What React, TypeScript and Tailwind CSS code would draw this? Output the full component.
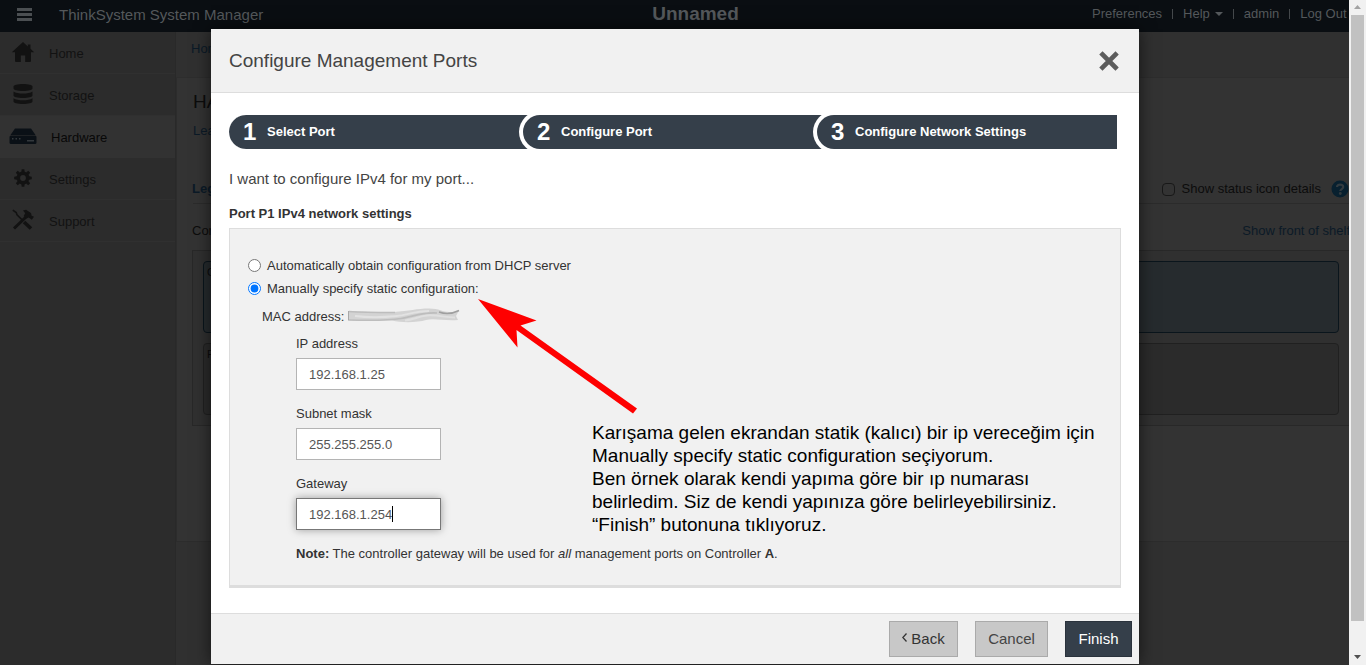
import type { ReactNode } from "react";

function HomeIcon() {
  return (
    <svg viewBox="0 0 24 22" className="h-[22px] w-6" fill="currentColor" aria-hidden="true">
      <path d="M12 1 .8 11.200H4V20a1 1 0 0 0 1 1h4.800v-6.500h4.400V21H19a1 1 0 0 0 1-1v-8.800h3.200L19.500 7.800V3.500h-2.700v1.900z" />
    </svg>
  );
}

function StorageIcon() {
  return (
    <svg viewBox="0 0 20 22" className="h-[22px] w-5" fill="currentColor" aria-hidden="true">
      <path d="M.500 3.500C.5 2 4.600 1 10 1s9.500 1 9.500 2.500v2C19.500 7 15.400 8 10 8S.5 7 .5 5.500z" />
      <path d="M.5 8.500C2.500 10 6 10.500 10 10.500s7.500-.5 9.500-2v4c0 1.500-4.100 2.500-9.500 2.500S.5 14 .5 12.500z" />
      <path d="M.5 15.300c2 1.500 5.500 2 9.500 2s7.500-.5 9.500-2v3.200c0 1.500-4.100 2.500-9.500 2.500S.5 20 .5 18.500z" />
    </svg>
  );
}

function HardwareIcon() {
  return (
    <svg viewBox="0 0 28 16" className="h-4 w-7" aria-hidden="true">
      <path d="M6 .5h16L26.500 7h-25z" fill="#0a1016" />
      <rect x=".5" y="7.500" width="27" height="8.500" rx="1.500" fill="#0a1016" />
      <path d="M3 10h1.500v1.500H3zM6.500 10H8v1.500H6.500zM10 10h1.500v1.500H10zM18 12h7v1.500h-7z" fill="#33383c" />
    </svg>
  );
}

function SettingsIcon() {
  const teeth = [0, 45, 90, 135, 180, 225, 270, 315];
  return (
    <svg viewBox="0 0 18 18" className="h-[18px] w-[18px]" aria-hidden="true">
      <circle cx="9" cy="9" r="4.700" fill="none" stroke="currentColor" strokeWidth="3.600" />
      {teeth.map((angle) => (
        <path key={angle} d="M7.300 3 7.700.2h2.600L10.700 3z" fill="currentColor" transform={`rotate(${angle} 9 9)`} />
      ))}
    </svg>
  );
}

function SupportIcon() {
  return (
    <svg viewBox="0 0 24 22" className="h-[22px] w-6" fill="none" stroke="currentColor" aria-hidden="true">
      <path d="M3 19.500 15.500 7.500" strokeWidth="3" />
      <path d="m12 1.500 3-.7 5 3.200.6 2.800 2.400 1-2.200 3-3-2.200-2.500 1-2.600-2.700 1.500-2.700z" fill="currentColor" stroke="none" />
      <path d="M1.800 1.200 5.200 3.500l.8 2.200 5 5" strokeWidth="1.600" />
      <path d="m13 13 7 6.500" strokeWidth="3.600" />
    </svg>
  );
}

const navItems: { label: string; icon: ReactNode; active?: boolean }[] = [
  { label: "Home", icon: <HomeIcon /> },
  { label: "Storage", icon: <StorageIcon /> },
  { label: "Hardware", icon: <HardwareIcon />, active: true },
  { label: "Settings", icon: <SettingsIcon /> },
  { label: "Support", icon: <SupportIcon /> },
];

function TopBar() {
  return (
    <header className="flex h-8 shrink-0 items-center bg-[#0a0e12] pb-1 text-[13px] text-[#54585b]">
      <div className="flex w-[299px] items-center">
        <button type="button" aria-label="Menu" className="ml-[17px] mr-[27px] flex w-[15px] flex-col gap-[2px] pt-[1px]">
          <span className="h-[3px] w-full bg-[#4b4f52]" />
          <span className="h-[3px] w-full bg-[#4b4f52]" />
          <span className="h-[3px] w-full bg-[#4b4f52]" />
        </button>
        <span className="pt-[2px] text-[15px]">ThinkSystem System Manager</span>
      </div>
      <div className="flex-1 text-center text-[19px] font-bold">Unnamed</div>
      <nav className="flex w-[257px] items-center whitespace-nowrap">
        <a href="#preferences">Preferences</a>
        <span className="mx-[10px] h-[10px] w-px bg-[#44484b]" />
        <a href="#help" className="flex items-center gap-[5px]">
          Help
          <svg viewBox="0 0 8 4" className="h-1 w-2" aria-hidden="true">
            <path d="M0 0h8L4 4z" fill="currentColor" />
          </svg>
        </a>
        <span className="mx-[10px] h-[10px] w-px bg-[#44484b]" />
        <a href="#admin">admin</a>
        <span className="mx-[10px] h-[10px] w-px bg-[#44484b]" />
        <a href="#logout">Log Out</a>
      </nav>
    </header>
  );
}

function SideNav() {
  return (
    <nav className="w-44 shrink-0 border-r border-[#292929] bg-[#2c2c2c] text-[13px]">
      <ul>
        {navItems.map((item) => (
          <li key={item.label} className={item.active ? "bg-[#323232]" : "border-b border-[#303030]"}>
            <a
              href={`#${item.label.toLowerCase()}`}
              className={
                item.active
                  ? "flex h-[42px] items-center pt-[2px] text-[#080808]"
                  : "flex h-[41px] items-center pt-[2px] text-[#121212]"
              }
            >
              <span className="flex w-[45px] justify-center pb-1">{item.icon}</span>
              <span className={item.active ? "pl-[6px]" : "pl-1"}>{item.label}</span>
            </a>
          </li>
        ))}
      </ul>
    </nav>
  );
}

function HardwarePage() {
  return (
    <main className="min-w-0 flex-1 overflow-hidden bg-[#303030] text-[13px] text-[#0c0c0c]">
      <div className="h-[46px] border-b border-[#2d2d2d] pl-[15px] pt-[7px] leading-5">
        <a href="#home" className="text-[#0b1a27]">Home</a>
      </div>
      <div className="h-[464px] border-b border-l border-[#2c2c2c] bg-[#333333] pl-4">
        <h1 className="pt-[12px] text-[19px] leading-6">HARDWARE</h1>
        <a href="#learn" className="mt-[7px] block leading-5 text-[#0b1a27]">Learn</a>
        <div className="mt-[34px] flex h-[29px] items-center justify-between border-b border-[#2b2b2b] leading-5">
          <a href="#legend" className="-ml-px font-bold text-[#0b1a27]">Legend</a>
          <div className="flex items-center">
            <input
              id="status-details"
              type="checkbox"
              className="mr-[7px] h-[13px] w-[13px] appearance-none rounded-sm border border-[#181818]"
            />
            <label htmlFor="status-details" className="mr-[10px]">Show status icon details</label>
            <svg viewBox="0 0 18 18" className="h-[18px] w-[18px]" aria-hidden="true">
              <circle cx="9" cy="9" r="8.500" fill="#08202f" />
              <path d="M6 7C6 3.800 12.200 3.800 12.200 7c0 2-2.900 2.100-2.900 4" fill="none" stroke="#333b40" strokeWidth="2.200" />
              <circle cx="9.300" cy="13.500" r="1.400" fill="#333b40" />
            </svg>
          </div>
        </div>
        <div className="flex h-[46px] items-center justify-between pt-2">
          <span className="-ml-px">Controller Shelf 99</span>
          <a href="#front" className="-mr-px text-[#0b1a27]">Show front of shelf</a>
        </div>
        <div className="-ml-px flex h-[176px] flex-col gap-[10px] border border-r-0 border-[#282828] bg-[#303030] py-[10px] pl-[10px] pr-[10px]">
          <div className="h-[72px] rounded-sm border border-[#0a151c] bg-[#262b2e] pl-[3px] pt-1 text-[11px] leading-3">Controller A</div>
          <div className="h-[72px] rounded-sm border border-[#202020] bg-[#2b2b2b] pl-[3px] pt-1 text-[11px] leading-3">Power</div>
        </div>
      </div>
    </main>
  );
}

function PageScrollbar() {
  return (
    <div className="flex w-[17px] shrink-0 flex-col items-center bg-[#f1f1f1]" aria-hidden="true">
      <svg viewBox="0 0 17 15" className="h-[15px] w-[17px]">
        <path d="M5 9h7L8.500 5z" fill="#a3a3a3" />
      </svg>
      <div className="w-[13px] flex-1 bg-[#c1c1c1]" />
      <div className="flex h-11 items-end">
        <svg viewBox="0 0 17 17" className="h-[17px] w-[17px]">
          <path d="M5 7h7l-3.500 4z" fill="#505050" />
        </svg>
      </div>
    </div>
  );
}

const steps = ["Select Port", "Configure Port", "Configure Network Settings"];

function Steps() {
  return (
    <ol className="mr-[4px] grid h-[34px] grid-cols-[1fr_1fr_300px] overflow-hidden rounded-l-full bg-[#353f4a]">
      {steps.map((label, index) => (
        <li
          key={label}
          className="flex items-center rounded-l-full bg-[#353f4a] pl-[14px] font-bold text-white ring-4 ring-white [clip-path:inset(0_0_0_-4px)]"
        >
          <span className="w-6 text-[24px] leading-6">{index + 1}</span>
          <span className="text-[13px]">{label}</span>
        </li>
      ))}
    </ol>
  );
}

function AddressField({ id, label, value, focused }: { id: string; label: string; value: string; focused?: boolean }) {
  return (
    <div className="mb-[14px] ml-[48px]">
      <label htmlFor={id} className="block h-6 leading-5">{label}</label>
      <div className="relative w-[145px]">
        <input
          id={id}
          type="text"
          defaultValue={value}
          className={
            focused
              ? "h-8 w-full border border-[#777777] bg-white px-3 text-[#555555] shadow-[0_0_8px_rgba(0,0,0,0.35)] outline-none"
              : "h-8 w-full border border-[#b4b4b4] bg-white px-3 text-[#555555] outline-none"
          }
        />
        {focused && <span className="absolute left-24 top-2 h-4 w-px bg-black" />}
      </div>
    </div>
  );
}

function RedactedValue() {
  return (
    <svg viewBox="0 0 114 18" className="h-[18px] w-[114px]" fill="none" aria-hidden="true">
      <path d="M1 3c16 1 30 1 46 1C62 3 70 .5 82 .5c10 0 14 3.500 20 3.500 4 0 7 0 10-1.500l-3 5.500 2 4c-14 1-24-2-32 0-8 2.500-24 3-34 .5-14 0-30 1-44-.5z" fill="#d3d3d3" />
      <path d="M1.500 3v9.500" stroke="#a8a8a8" />
      <path d="M2 3.500c14 1 30 1 46 1" stroke="#bdbdbd" strokeWidth="1.400" />
      <path d="M2 12c20 .5 40 .5 52-1.500S76 4 90 5" stroke="#bdbdbd" strokeWidth="1.600" />
      <path d="M92 4c8 3 14 1.500 20-1.500" stroke="#9f9f9f" strokeWidth="1.400" />
      <path d="M8 8c16 2 32 1 42 0s18-5 32-5" stroke="#e2e2e2" strokeWidth="2" />
      <path d="M58 12.500c10-1 12-4 22-5s18 2 28 2" stroke="#e0e0e0" strokeWidth="2" />
    </svg>
  );
}

function Annotation() {
  return (
    <>
      <svg viewBox="0 0 162 116" className="absolute left-[267px] top-[270px] h-[116px] w-[162px]" aria-hidden="true">
        <path d="M0 0 58.500 21.500 42.500 26.500 159 109.500l-4 5L38.500 31l1 17.500Z" fill="#fe0000" />
      </svg>
      <p className="absolute left-[381px] top-[392px] whitespace-nowrap text-[19px] leading-[23px] text-black">
        Karışama gelen ekrandan statik (kalıcı) bir ip vereceğim için
        <br />
        Manually specify static configuration seçiyorum.
        <br />
        Ben örnek olarak kendi yapıma göre bir ıp numarası
        <br />
        belirledim. Siz de kendi yapınıza göre belirleyebilirsiniz.
        <br />
        “Finish” butonuna tıklıyoruz.
      </p>
    </>
  );
}

function ConfigureDialog() {
  return (
    <section
      role="dialog"
      aria-labelledby="dialog-title"
      className="relative w-[928px] max-w-full bg-white text-[13px] text-[#333333] shadow-[0_0_16px_rgba(0,0,0,0.6)]"
    >
      <header className="flex h-16 items-center justify-between border-b border-[#dddddd] bg-[#f1f1f1] pl-[18px] pr-5">
        <h2 id="dialog-title" className="pt-[2px] text-[19px] text-[#444444]">Configure Management Ports</h2>
        <button type="button" aria-label="Close">
          <svg viewBox="0 0 20 20" className="h-5 w-5" aria-hidden="true">
            <path d="m3.500 3.500 13 13M16.500 3.500l-13 13" stroke="#5c5c5c" strokeWidth="4.600" strokeLinecap="square" strokeLinejoin="round" />
          </svg>
        </button>
      </header>
      <div className="px-[18px] pb-[25px] pt-[22px]">
        <Steps />
        <p className="mt-5 text-[15px] leading-5 text-[#444444]">I want to configure IPv4 for my port...</p>
        <h3 className="mt-[15px] font-bold leading-5">Port P1 IPv4 network settings</h3>
        <form className="mt-1 border border-b-[3px] border-[#dddddd] bg-[#f1f1f1] pb-[21px] pl-[18px] pt-[25px]">
          <div className="flex h-[23px] items-center">
            <input id="dhcp" type="radio" name="mode" className="mr-[6px] h-[13px] w-[13px]" />
            <label htmlFor="dhcp">Automatically obtain configuration from DHCP server</label>
          </div>
          <div className="flex h-[23px] items-center">
            <input id="static" type="radio" name="mode" defaultChecked className="mr-[6px] h-[13px] w-[13px] accent-[#0075ff]" />
            <label htmlFor="static">Manually specify static configuration:</label>
          </div>
          <div className="ml-[14px] mt-[7px] flex h-5 items-center gap-[3px]">
            MAC address:
            <RedactedValue />
          </div>
          <div className="mt-[7px]">
            <AddressField id="ip" label="IP address" value="192.168.1.25" />
            <AddressField id="mask" label="Subnet mask" value="255.255.255.0" />
            <AddressField id="gateway" label="Gateway" value="192.168.1.254" focused />
          </div>
          <p className="ml-[48px] leading-5">
            <b>Note:</b> The controller gateway will be used for <i>all</i> management ports on Controller <b>A</b>.
          </p>
        </form>
      </div>
      <footer className="flex h-[51px] justify-end gap-[17px] border-t border-[#dddddd] bg-[#f1f1f1] pr-[7px] pt-[7px] text-[15px]">
        <button type="button" className="flex h-9 w-[69px] items-center justify-center gap-1 border border-[#aaaaaa] bg-[#c8c8c8]">
          <svg viewBox="0 0 5 9" className="mb-1 h-[9px] w-[5px]" fill="none" aria-hidden="true">
            <path d="M4.500.5.800 4.500l3.700 4" stroke="#333333" strokeWidth="1.300" />
          </svg>
          Back
        </button>
        <button type="button" className="h-9 w-[73px] border border-[#aaaaaa] bg-[#c8c8c8] text-[#444444]">Cancel</button>
        <button type="submit" className="h-9 w-[67px] border border-[#2a323c] bg-[#353f4a] text-white">Finish</button>
      </footer>
      <Annotation />
    </section>
  );
}

export default function App() {
  return (
    <div className="flex h-screen overflow-hidden font-['Liberation_Sans',Arial,sans-serif]">
      <div className="relative flex min-w-0 flex-1 flex-col overflow-hidden bg-[#303030]">
        <TopBar />
        <div className="flex min-h-0 flex-1">
          <SideNav />
          <HardwarePage />
        </div>
        <div className="absolute inset-0 flex items-start justify-center pl-px pt-[29px]">
          <ConfigureDialog />
        </div>
      </div>
      <PageScrollbar />
    </div>
  );
}
